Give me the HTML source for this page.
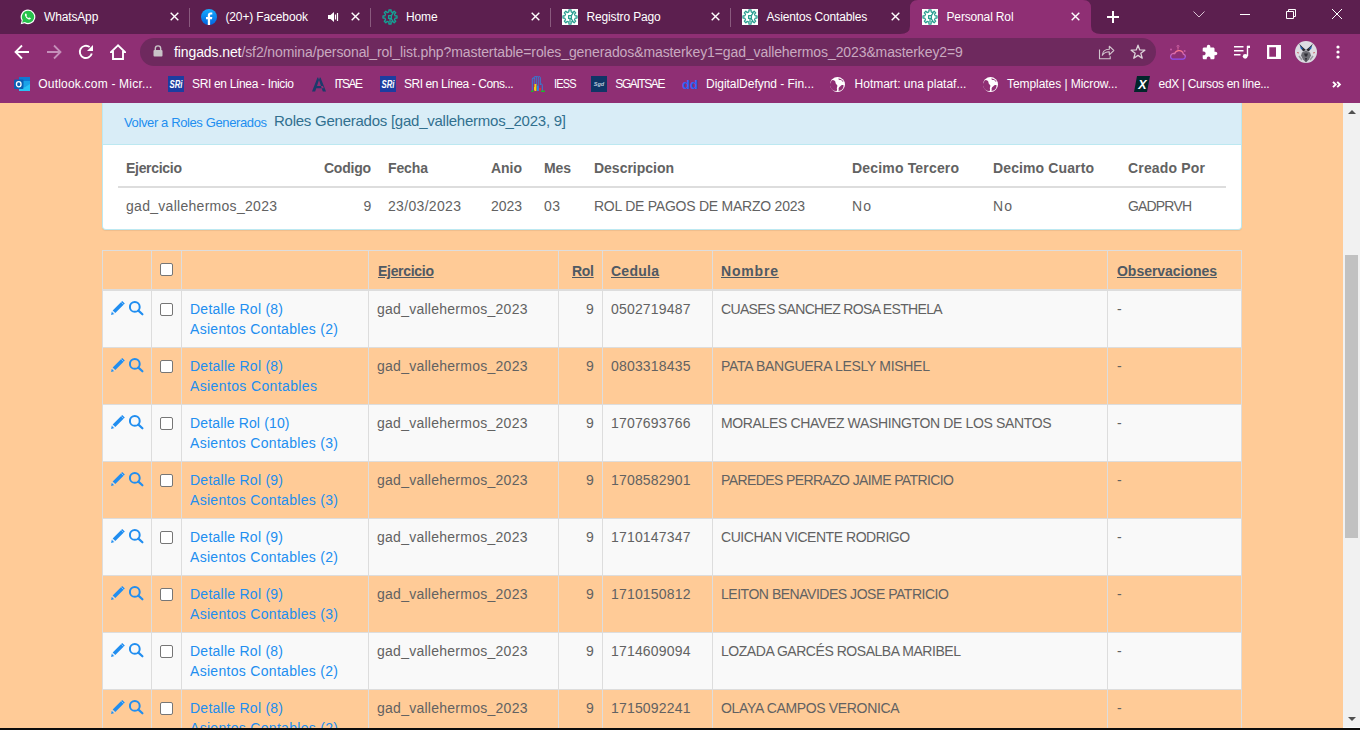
<!DOCTYPE html>
<html><head><meta charset="utf-8">
<style>
*{box-sizing:border-box}
html,body{margin:0;padding:0;width:1360px;height:730px;overflow:hidden;font-family:"Liberation Sans",sans-serif;background:#ffcb97}
.abs{position:absolute}
#tabs{position:absolute;left:0;top:0;width:1360px;height:34px;background:#5c1f4f}
#toolbar{position:absolute;left:0;top:34px;width:1360px;height:34px;background:#8f2f74}
#bmarks{position:absolute;left:0;top:68px;width:1360px;height:35px;background:#8f2f74}
.tt{position:absolute;top:9px;font-size:12px;color:#fff;white-space:nowrap;line-height:16px;letter-spacing:-0.15px}
.fav{position:absolute;top:9px;width:16px;height:16px}
.sep{position:absolute;top:8px;width:1px;height:19px;background:#8a5a7e}
.cls{position:absolute;top:12px;width:9px;height:9px}
.bt{position:absolute;top:8px;font-size:12px;color:#fff;white-space:nowrap;line-height:16px}
.bi{position:absolute;top:8px;width:16px;height:16px}
#page{position:absolute;left:0;top:103px;width:1343px;height:625px;background:#ffcb97;overflow:hidden}
#sb{position:absolute;left:1343px;top:103px;width:17px;height:625px;background:#f1f1f1}
#bottom{position:absolute;left:0;top:728px;width:1360px;height:2px;background:#0c0c0c}
.tx{position:absolute;white-space:nowrap;line-height:20px}
.cb{position:absolute;width:13px;height:13px;background:#fff;border:1px solid #767676;border-radius:2px}
</style></head><body>
<div id="tabs">
<svg class="abs" style="left:900px;top:0" width="202" height="34" viewBox="0 0 202 34"><path d="M0 34 Q10 34 10 26 L10 8 Q10 0 18 0 L183 0 Q191 0 191 8 L191 26 Q191 34 201 34 Z" fill="#8f2f74"/></svg>
<svg class="fav" style="left:20px" viewBox="0 0 16 16"><path d="M8 .6a7.3 7.3 0 0 0-6.3 11L.7 15.3l3.8-1A7.3 7.3 0 1 0 8 .6z" fill="#fff"/><path d="M8 1.8a6.1 6.1 0 0 0-5.2 9.3l-.7 2.7 2.8-.7A6.1 6.1 0 1 0 8 1.8z" fill="#27c24c"/><path d="M5.6 4.5c.3-.2.6-.1.7.2l.6 1.3c.1.3-.2.6-.5.9.4.9 1.1 1.6 2 2 .3-.3.6-.6.9-.5l1.3.6c.3.1.3.5.1.8-.5.7-1.2.9-2 .6A6 6 0 0 1 5 6.4c-.2-.8.1-1.5.6-1.9z" fill="#fff"/></svg>
<div class="tt" style="left:44px">WhatsApp</div>
<svg class="cls" style="left:169.5px" viewBox="0 0 9 9"><path d="M0.7 0.7L8.3 8.3M8.3 0.7L0.7 8.3" stroke="#fff" stroke-width="1.4"/></svg>
<svg class="fav" style="left:201px" viewBox="0 0 16 16"><defs><linearGradient id="fbg" x1="0" y1="0" x2="0" y2="1"><stop offset="0" stop-color="#18acfe"/><stop offset="1" stop-color="#0163e0"/></linearGradient></defs><circle cx="8" cy="8" r="8" fill="url(#fbg)"/><path d="M9.1 16V10.2h1.9l.3-2.2H9.1V6.6c0-.6.2-1 1-1h1.2V3.6c-.2 0-.9-.1-1.7-.1-1.7 0-2.8 1-2.8 2.9V8H5v2.2h1.8V16z" fill="#fff"/></svg>
<div class="tt" style="left:225.5px">(20+) Facebook</div>
<svg class="cls" style="left:350.5px" viewBox="0 0 9 9"><path d="M0.7 0.7L8.3 8.3M8.3 0.7L0.7 8.3" stroke="#fff" stroke-width="1.4"/></svg>
<svg class="fav" style="left:382px" viewBox="0 0 16 16"><rect width="16" height="16" fill="none"/><g fill="none" stroke="#12a596" stroke-width="1.3" stroke-linejoin="round"><path d="M6.88 2.82 L6.89 0.99 L9.11 0.99 L9.12 2.82 L10.87 3.55 L12.17 2.26 L13.74 3.83 L12.45 5.13 L13.18 6.88 L15.01 6.89 L15.01 9.11 L13.18 9.12 L12.45 10.87 L13.74 12.17 L12.17 13.74 L10.87 12.45 L9.12 13.18 L9.11 15.01 L6.89 15.01 L6.88 13.18 L5.13 12.45 L3.83 13.74 L2.26 12.17 L3.55 10.87 L2.82 9.12 L0.99 9.11 L0.99 6.89 L2.82 6.88 L3.55 5.13 L2.26 3.83 L3.83 2.26 L5.13 3.55Z"/><rect x="6.6" y="6.6" width="2.8" height="2.8"/><path d="M8 9.4V13.3M9.4 6.6L11.2 3.6M9 9.4l2 3"/></g></svg>
<div class="tt" style="left:406px">Home</div>
<svg class="cls" style="left:530.5px" viewBox="0 0 9 9"><path d="M0.7 0.7L8.3 8.3M8.3 0.7L0.7 8.3" stroke="#fff" stroke-width="1.4"/></svg>
<svg class="fav" style="left:562px" viewBox="0 0 16 16"><rect width="16" height="16" fill="#fff"/><g fill="none" stroke="#2a9d91" stroke-width="1.25" stroke-linejoin="round"><path d="M6.88 2.82 L6.89 0.99 L9.11 0.99 L9.12 2.82 L10.87 3.55 L12.17 2.26 L13.74 3.83 L12.45 5.13 L13.18 6.88 L15.01 6.89 L15.01 9.11 L13.18 9.12 L12.45 10.87 L13.74 12.17 L12.17 13.74 L10.87 12.45 L9.12 13.18 L9.11 15.01 L6.89 15.01 L6.88 13.18 L5.13 12.45 L3.83 13.74 L2.26 12.17 L3.55 10.87 L2.82 9.12 L0.99 9.11 L0.99 6.89 L2.82 6.88 L3.55 5.13 L2.26 3.83 L3.83 2.26 L5.13 3.55Z"/><rect x="6.6" y="6.6" width="2.8" height="2.8"/><path d="M8 9.4V13.3M9.4 6.6L11.2 3.6M9 9.4l2 3"/></g></svg>
<div class="tt" style="left:586.5px">Registro Pago</div>
<svg class="cls" style="left:710.5px" viewBox="0 0 9 9"><path d="M0.7 0.7L8.3 8.3M8.3 0.7L0.7 8.3" stroke="#fff" stroke-width="1.4"/></svg>
<svg class="fav" style="left:742px" viewBox="0 0 16 16"><rect width="16" height="16" fill="#fff"/><g fill="none" stroke="#2a9d91" stroke-width="1.25" stroke-linejoin="round"><path d="M6.88 2.82 L6.89 0.99 L9.11 0.99 L9.12 2.82 L10.87 3.55 L12.17 2.26 L13.74 3.83 L12.45 5.13 L13.18 6.88 L15.01 6.89 L15.01 9.11 L13.18 9.12 L12.45 10.87 L13.74 12.17 L12.17 13.74 L10.87 12.45 L9.12 13.18 L9.11 15.01 L6.89 15.01 L6.88 13.18 L5.13 12.45 L3.83 13.74 L2.26 12.17 L3.55 10.87 L2.82 9.12 L0.99 9.11 L0.99 6.89 L2.82 6.88 L3.55 5.13 L2.26 3.83 L3.83 2.26 L5.13 3.55Z"/><rect x="6.6" y="6.6" width="2.8" height="2.8"/><path d="M8 9.4V13.3M9.4 6.6L11.2 3.6M9 9.4l2 3"/></g></svg>
<div class="tt" style="left:766.5px">Asientos Contables</div>
<svg class="cls" style="left:890.5px" viewBox="0 0 9 9"><path d="M0.7 0.7L8.3 8.3M8.3 0.7L0.7 8.3" stroke="#fff" stroke-width="1.4"/></svg>
<svg class="fav" style="left:922px" viewBox="0 0 16 16"><rect width="16" height="16" fill="#fff"/><g fill="none" stroke="#2a9d91" stroke-width="1.25" stroke-linejoin="round"><path d="M6.88 2.82 L6.89 0.99 L9.11 0.99 L9.12 2.82 L10.87 3.55 L12.17 2.26 L13.74 3.83 L12.45 5.13 L13.18 6.88 L15.01 6.89 L15.01 9.11 L13.18 9.12 L12.45 10.87 L13.74 12.17 L12.17 13.74 L10.87 12.45 L9.12 13.18 L9.11 15.01 L6.89 15.01 L6.88 13.18 L5.13 12.45 L3.83 13.74 L2.26 12.17 L3.55 10.87 L2.82 9.12 L0.99 9.11 L0.99 6.89 L2.82 6.88 L3.55 5.13 L2.26 3.83 L3.83 2.26 L5.13 3.55Z"/><rect x="6.6" y="6.6" width="2.8" height="2.8"/><path d="M8 9.4V13.3M9.4 6.6L11.2 3.6M9 9.4l2 3"/></g></svg>
<div class="tt" style="left:946.5px">Personal Rol</div>
<svg class="cls" style="left:1070.5px" viewBox="0 0 9 9"><path d="M0.7 0.7L8.3 8.3M8.3 0.7L0.7 8.3" stroke="#fff" stroke-width="1.4"/></svg>
<div class="sep" style="left:189px"></div>
<div class="sep" style="left:370px"></div>
<div class="sep" style="left:550px"></div>
<div class="sep" style="left:730px"></div>
<svg class="abs" style="left:328px;top:12px" width="11" height="10" viewBox="0 0 11 10"><path d="M0 3h2.5L6 0v10L2.5 7H0z" fill="#fff"/><path d="M7.5 2.5v5M9.5 1v8" stroke="#fff" stroke-width="1.2"/></svg>
<svg class="abs" style="left:1107px;top:11px" width="12" height="12" viewBox="0 0 12 12"><path d="M6 0v12M0 6h12" stroke="#fff" stroke-width="2"/></svg>
<svg class="abs" style="left:1193px;top:11px" width="12" height="7" viewBox="0 0 12 7"><path d="M.5.5L6 6 11.5.5" fill="none" stroke="#d8c2d2" stroke-width="1"/></svg>
<div class="abs" style="left:1240px;top:14px;width:10px;height:1px;background:#fff"></div>
<svg class="abs" style="left:1286px;top:9px" width="10" height="10" viewBox="0 0 10 10"><path d="M.5 2.5h7v7h-7z M2.5 2.5V.5h7v7h-2" fill="none" stroke="#fff" stroke-width="1"/></svg>
<svg class="abs" style="left:1332px;top:9px" width="10" height="10" viewBox="0 0 10 10"><path d="M0 0L10 10M10 0L0 10" stroke="#fff" stroke-width="1"/></svg>
</div>
<div id="toolbar">
<svg class="abs" style="left:14px;top:10px" width="16" height="16" viewBox="0 0 16 16"><path d="M15 8H2M8 1.5L1.5 8 8 14.5" fill="none" stroke="#fff" stroke-width="1.8"/></svg>
<svg class="abs" style="left:46px;top:10px" width="16" height="16" viewBox="0 0 16 16"><path d="M1 8h13M8 1.5L14.5 8 8 14.5" fill="none" stroke="#c590ba" stroke-width="1.8"/></svg>
<svg class="abs" style="left:78px;top:10px" width="16" height="16" viewBox="0 0 16 16"><path d="M13.79 9.48A6.1 6.1 0 1 1 11.66 3.09" fill="none" stroke="#fff" stroke-width="1.9"/><path d="M9 6.9H15V0.9z" fill="#fff"/></svg>
<svg class="abs" style="left:110px;top:10px" width="16" height="16" viewBox="0 0 16 16"><path d="M8 1.4L1 8H3V15H13V8H15Z" fill="none" stroke="#fff" stroke-width="1.9" stroke-linejoin="miter" stroke-miterlimit="3"/></svg>
<div class="abs" style="left:140px;top:4px;width:1016px;height:28px;border-radius:14px;background:#6e295e"></div>
<svg class="abs" style="left:153px;top:11px" width="10" height="12" viewBox="0 0 10 12"><path d="M2.3 5V3.6a2.7 2.7 0 0 1 5.4 0V5" fill="none" stroke="#c9c4c8" stroke-width="1.4"/><rect x="0.5" y="5" width="9" height="6.5" rx="1" fill="#c9c4c8"/></svg>
<div class="abs" style="left:174px;top:10px;font-size:14px;line-height:16px;color:#fff;white-space:nowrap;letter-spacing:-0.1px" id="url">fingads.net<span style="color:#c9a9c0">/sf2/nomina/personal_rol_list.php?mastertable=roles_generados&amp;masterkey1=gad_vallehermos_2023&amp;masterkey2=9</span></div>
<svg class="abs" style="left:1098px;top:10px" width="17" height="16" viewBox="0 0 17 16"><path d="M1.5 5.5V14.7H12.2V12.2" fill="none" stroke="#d2c6ce" stroke-width="1.1"/><path d="M4.3 11.3C4.6 7.6 7.3 5.3 11.3 5.3V2.2L15.8 6.5 11.3 10.8V7.8C8 7.8 5.8 9.2 4.3 11.3z" fill="none" stroke="#d2c6ce" stroke-width="1.1" stroke-linejoin="round"/></svg>
<svg class="abs" style="left:1130px;top:10px" width="16" height="16" viewBox="0 0 16 16"><path d="M8.00 1.20 L9.76 5.97 L14.85 6.18 L10.85 9.33 L12.23 14.22 L8.00 11.40 L3.77 14.22 L5.15 9.33 L1.15 6.18 L6.24 5.97Z" fill="none" stroke="#dcd2d8" stroke-width="1.3" stroke-linejoin="round"/></svg>
<svg class="abs" style="left:1168px;top:9px" width="20" height="18" viewBox="0 0 20 18"><defs><linearGradient id="wg" x1="0" y1="0" x2="0" y2="1"><stop offset="0" stop-color="#ff7a8a"/><stop offset="1" stop-color="#8a4df5"/></linearGradient></defs><path d="M4.5 16.2h10.5a2.6 2.6 0 0 0 .4-5.1 4.6 4.6 0 0 0-8.8-.4A2.8 2.8 0 0 0 4.5 16.2z" fill="none" stroke="url(#wg)" stroke-width="1.3"/><circle cx="10" cy="3.3" r="1" fill="none" stroke="#d266a8" stroke-width=".8"/><path d="M10 4.3v2.5" stroke="#e86e9e" stroke-width=".8"/><circle cx="3" cy="6.6" r="1" fill="#c85aa5"/><circle cx="16.6" cy="8" r="1" fill="#c85aa5"/></svg>
<svg class="abs" style="left:1202px;top:10px" width="16" height="16" viewBox="1 0 23 23"><path d="M20.5 11H19V7c0-1.1-.9-2-2-2h-4V3.5C13 2.12 11.88 1 10.5 1S8 2.12 8 3.5V5H4c-1.1 0-1.99.9-1.99 2v3.8H3.5c1.49 0 2.7 1.21 2.7 2.7s-1.21 2.7-2.7 2.7H2V20c0 1.1.9 2 2 2h3.8v-1.5c0-1.49 1.210-2.7 2.7-2.7 1.49 0 2.7 1.21 2.7 2.7V22H17c1.1 0 2-.9 2-2v-4h1.5c1.38 0 2.5-1.12 2.5-2.5S21.88 11 20.5 11z" fill="#fff"/></svg>
<svg class="abs" style="left:1233px;top:11px" width="17" height="14" viewBox="0 0 17 14"><path d="M1 1.7h9.5M1 5.7h9.5M1 9.7h6.5" stroke="#fff" stroke-width="1.5"/><path d="M14.5 1v10" stroke="#fff" stroke-width="1.4"/><path d="M14 0.7h3v2.3h-3z" fill="#fff"/><circle cx="12.2" cy="11.3" r="2.4" fill="#fff"/></svg>
<svg class="abs" style="left:1267px;top:11px" width="14" height="14" viewBox="0 0 14 14"><path d="M0 0h14v14H0z M2.3 2.3v9.4H9V2.3z" fill="#fff" fill-rule="evenodd"/></svg>
<svg class="abs" style="left:1295px;top:7px" width="22" height="22" viewBox="0 0 22 22"><defs><clipPath id="avc"><circle cx="11" cy="11" r="11"/></clipPath></defs><g clip-path="url(#avc)"><rect width="22" height="22" fill="#dcdce2"/><path d="M4 2.5l3.5 3.5 3.5 3-3 1.5z M18 2.5l-3.5 3.5-3.5 3 3 1.5z" fill="#2b2b33"/><path d="M5 4.5l3 3.3-2 .8z M17 4.5l-3 3.3 2 .8z" fill="#1f5fb5"/><path d="M7 11.5l4-2 4 2 1 3-2 4-3 3-3-3-2-4z" fill="#6d6d74"/><path d="M9 12.5h4l-1 3h-2z M10 17l1 4 1-4z" fill="#2e2e36"/><path d="M4 15l3 4M18 15l-3 4" stroke="#9a9aa2" stroke-width="1.5"/><path d="M2 11.5l2 .5M20 11.5l-2 .5" stroke="#c65050" stroke-width=".8"/></g></svg>
<svg class="abs" style="left:1336px;top:11px" width="4" height="14" viewBox="0 0 4 14"><circle cx="2" cy="2" r="1.6" fill="#fff"/><circle cx="2" cy="7" r="1.6" fill="#fff"/><circle cx="2" cy="12" r="1.6" fill="#fff"/></svg>
</div>
<div id="bmarks">
<svg class="bi" style="left:14px" viewBox="0 0 16 16"><rect x="5" y="1" width="11" height="14" rx="1" fill="#1ba2e8"/><path d="M5 8l5.5 3.5L16 8v7H5z" fill="#28c3f5"/><rect x="5" y="1" width="11" height="4" fill="#0f78d4"/><rect x="0" y="3.5" width="9.5" height="9.5" rx="1" fill="#0a5fb4"/><ellipse cx="4.75" cy="8.25" rx="2.3" ry="2.6" fill="none" stroke="#fff" stroke-width="1.3"/></svg>
<div class="bt" style="left:38.3px;letter-spacing:0.200px">Outlook.com - Micr...</div>
<svg class="bi" style="left:168px" viewBox="0 0 16 16"><rect width="16" height="16" fill="#1c3da0"/><text x="1.5" y="12" font-family="Liberation Sans" font-weight="bold" font-style="italic" font-size="10" fill="#fff" textLength="13" lengthAdjust="spacingAndGlyphs">SRi</text></svg>
<div class="bt" style="left:192.0px;letter-spacing:-0.335px">SRI en Línea - Inicio</div>
<svg class="bi" style="left:311px" viewBox="0 0 16 16"><path d="M1 15.5L6.5 1.5h2.3L4.2 15.5z M15 15.5L9.5 1.5H7.2l4.6 14z M4 10l8 0 0.8 2.3H3.2z" fill="#1b3b6b"/></svg>
<div class="bt" style="left:334.6px;letter-spacing:-1.575px">ITSAE</div>
<svg class="bi" style="left:380px" viewBox="0 0 16 16"><rect width="16" height="16" fill="#1c3da0"/><text x="1.5" y="12" font-family="Liberation Sans" font-weight="bold" font-style="italic" font-size="10" fill="#fff" textLength="13" lengthAdjust="spacingAndGlyphs">SRi</text></svg>
<div class="bt" style="left:404.0px;letter-spacing:-0.433px">SRI en Línea - Cons...</div>
<svg class="bi" style="left:531px" viewBox="0 0 16 16"><path d="M1.3 15V3.2Q1.3 1.8 2.3 1.8T3.3 3.2V1.6Q3.3 0.4 4.3 0.4T5.3 1.6V1.3Q5.3 0.2 6.3 0.2T7.3 1.3V1.6Q7.3 0.6 8.3 0.6T9.3 1.6V8.8Q9.6 7.9 10.5 8T11.3 9.3V15" fill="none" stroke="#2a86e0" stroke-width="0.9"/><path d="M3.3 3.2V8M5.3 1.6V9M7.3 1.6V9.5" stroke="#2a86e0" stroke-width="0.8"/><path d="M3.4 8h2v7h-2z M3 11h1.5v3H3z" fill="#f2d40f"/><path d="M5.9 9.5h2v5.5h-2z" fill="#2a86e0"/><path d="M8 12h2v2.6H8z" fill="#e2302a"/><path d="M0 14.6h2.5V16H0z M10 14.6h4V16h-4z" fill="#21b52a"/></svg>
<div class="bt" style="left:554px;letter-spacing:-0.9px;transform:scaleX(0.92);transform-origin:left">IESS</div>
<svg class="bi" style="left:591px" viewBox="0 0 16 16"><rect width="16" height="16" fill="#0f3566"/><text x="8" y="10" font-family="Liberation Sans" font-style="italic" font-weight="bold" font-size="5.5" fill="#b9c8dc" text-anchor="middle">Sgd</text></svg>
<div class="bt" style="left:615.3px;letter-spacing:-1.414px">SGAITSAE</div>
<svg class="bi" style="left:682px" viewBox="0 0 16 16"><text x="0" y="13" font-family="Liberation Sans" font-weight="bold" font-size="13.5" fill="#2d62f7" textLength="16" lengthAdjust="spacingAndGlyphs">dd</text></svg>
<div class="bt" style="left:706.0px;letter-spacing:-0.033px">DigitalDefynd - Fin...</div>
<svg class="bi" style="left:830px;top:9px;width:15px;height:15px" viewBox="0 0 16 16"><circle cx="8" cy="8" r="8" fill="#fff"/><path d="M2.6 3.2c2 .2 3.4 1.3 3.3 2.8-.1 1.3 1.5 1.8 1.9 3.1.4 1.2-.9 1.9-.4 3.5.3.8.1 1.7-.3 2.4A6.6 6.6 0 0 1 2.6 3.2zM8.8 1.5c.2 1.2 1.4 1.8 2.7 1.7 1.1 0 1.3 1.6 2.4 1.9l.6.2A6.6 6.6 0 0 0 8.8 1.5zM14.6 9c-1.1-.7-2.6-.6-3.3.5-.6 1-2 1.2-2.1 2.6 0 1.1.3 2.1-.3 2.9a6.6 6.6 0 0 0 5.7-6z" fill="#8f2f74"/></svg>
<div class="bt" style="left:854.6px;letter-spacing:-0.014px">Hotmart: una plataf...</div>
<svg class="bi" style="left:983px;top:9px;width:15px;height:15px" viewBox="0 0 16 16"><circle cx="8" cy="8" r="8" fill="#fff"/><path d="M2.6 3.2c2 .2 3.4 1.3 3.3 2.8-.1 1.3 1.5 1.8 1.9 3.1.4 1.2-.9 1.9-.4 3.5.3.8.1 1.7-.3 2.4A6.6 6.6 0 0 1 2.6 3.2zM8.8 1.5c.2 1.2 1.4 1.8 2.7 1.7 1.1 0 1.3 1.6 2.4 1.9l.6.2A6.6 6.6 0 0 0 8.8 1.5zM14.6 9c-1.1-.7-2.6-.6-3.3.5-.6 1-2 1.2-2.1 2.6 0 1.1.3 2.1-.3 2.9a6.6 6.6 0 0 0 5.7-6z" fill="#8f2f74"/></svg>
<div class="bt" style="left:1007.0px;letter-spacing:-0.060px">Templates | Microw...</div>
<svg class="bi" style="left:1134px" viewBox="0 0 16 16"><path d="M3 0h13l-3 16H0z" fill="#02262b"/><text x="8.3" y="13" font-family="Liberation Sans" font-weight="bold" font-style="italic" font-size="12.5" fill="#fff" text-anchor="middle">X</text></svg>
<div class="bt" style="left:1158.6px;letter-spacing:-0.341px">edX | Cursos en líne...</div>
<svg class="abs" style="left:1332px;top:13px" width="10" height="7" viewBox="0 0 10 7"><path d="M1 .8l2.7 2.7L1 6.2M5.2 .8l2.7 2.7-2.7 2.7" fill="none" stroke="#fff" stroke-width="1.9"/></svg>
</div>
<div id="page">
<!--PAGE-->
<div class="abs" style="left:102px;top:0px;width:1140px;height:127px;background:#fff;border:1px solid #bce8f1;border-top:none;border-radius:0 0 4px 4px;box-shadow:0 1px 1px rgba(0,0,0,.07)"></div>
<div class="abs" style="left:103px;top:0px;width:1138px;height:41px;background:#d9edf7;"></div>
<div class="abs" style="left:103px;top:41px;width:1138px;height:1px;background:#bce8f1;"></div>
<div class="abs" style="left:118px;top:83px;width:1108px;height:2px;background:#ddd;"></div>
<div class="abs" style="left:102px;top:147px;width:1140px;height:41px;background:#ffcb97;"></div>
<div class="abs" style="left:102px;top:188px;width:1140px;height:56px;background:#f9f9f9;"></div>
<div class="abs" style="left:102px;top:245px;width:1140px;height:56px;background:#ffcb97;"></div>
<div class="abs" style="left:102px;top:302px;width:1140px;height:56px;background:#f9f9f9;"></div>
<div class="abs" style="left:102px;top:359px;width:1140px;height:56px;background:#ffcb97;"></div>
<div class="abs" style="left:102px;top:416px;width:1140px;height:56px;background:#f9f9f9;"></div>
<div class="abs" style="left:102px;top:473px;width:1140px;height:56px;background:#ffcb97;"></div>
<div class="abs" style="left:102px;top:530px;width:1140px;height:56px;background:#f9f9f9;"></div>
<div class="abs" style="left:102px;top:587px;width:1140px;height:56px;background:#ffcb97;"></div>
<div class="abs" style="left:102px;top:147px;width:1140px;height:1px;background:#ddd;"></div>
<div class="abs" style="left:102px;top:186px;width:1140px;height:2px;background:#ddd;"></div>
<div class="abs" style="left:102px;top:244px;width:1140px;height:1px;background:#ddd;"></div>
<div class="abs" style="left:102px;top:301px;width:1140px;height:1px;background:#ddd;"></div>
<div class="abs" style="left:102px;top:358px;width:1140px;height:1px;background:#ddd;"></div>
<div class="abs" style="left:102px;top:415px;width:1140px;height:1px;background:#ddd;"></div>
<div class="abs" style="left:102px;top:472px;width:1140px;height:1px;background:#ddd;"></div>
<div class="abs" style="left:102px;top:529px;width:1140px;height:1px;background:#ddd;"></div>
<div class="abs" style="left:102px;top:586px;width:1140px;height:1px;background:#ddd;"></div>
<div class="abs" style="left:102px;top:643px;width:1140px;height:1px;background:#ddd;"></div>
<div class="abs" style="left:102px;top:147px;width:1px;height:500px;background:#ddd;"></div>
<div class="abs" style="left:151px;top:147px;width:1px;height:500px;background:#ddd;"></div>
<div class="abs" style="left:181px;top:147px;width:1px;height:500px;background:#ddd;"></div>
<div class="abs" style="left:368px;top:147px;width:1px;height:500px;background:#ddd;"></div>
<div class="abs" style="left:558px;top:147px;width:1px;height:500px;background:#ddd;"></div>
<div class="abs" style="left:602px;top:147px;width:1px;height:500px;background:#ddd;"></div>
<div class="abs" style="left:712px;top:147px;width:1px;height:500px;background:#ddd;"></div>
<div class="abs" style="left:1107px;top:147px;width:1px;height:500px;background:#ddd;"></div>
<div class="abs" style="left:1241px;top:147px;width:1px;height:500px;background:#ddd;"></div>
<div class="cb" style="left:160px;top:160px"></div>
<svg class="abs" style="left:111px;top:198px" width="14" height="14" viewBox="0 0 14 14"><path d="M1.7 9.5L4.3 12.1 13.8 2.6 11.2 0z" fill="#218ef0"/><path d="M0.9 10.3L3.5 12.9 0.1 13.9z" fill="#218ef0"/><path d="M0.7 10.2L3.6 13.1" stroke="#fff" stroke-width="0.7"/><path d="M10.3 1.3L12.5 3.5" stroke="#fff" stroke-width="0.6" opacity=".8"/></svg>
<svg class="abs" style="left:129px;top:198px" width="15" height="15" viewBox="0 0 15 15"><circle cx="5.8" cy="5.9" r="4.9" fill="none" stroke="#218ef0" stroke-width="2"/><path d="M9.4 9.6l4 3.7" stroke="#218ef0" stroke-width="2.2" stroke-linecap="round"/></svg>
<div class="cb" style="left:160px;top:200px"></div>
<svg class="abs" style="left:111px;top:255px" width="14" height="14" viewBox="0 0 14 14"><path d="M1.7 9.5L4.3 12.1 13.8 2.6 11.2 0z" fill="#218ef0"/><path d="M0.9 10.3L3.5 12.9 0.1 13.9z" fill="#218ef0"/><path d="M0.7 10.2L3.6 13.1" stroke="#fff" stroke-width="0.7"/><path d="M10.3 1.3L12.5 3.5" stroke="#fff" stroke-width="0.6" opacity=".8"/></svg>
<svg class="abs" style="left:129px;top:255px" width="15" height="15" viewBox="0 0 15 15"><circle cx="5.8" cy="5.9" r="4.9" fill="none" stroke="#218ef0" stroke-width="2"/><path d="M9.4 9.6l4 3.7" stroke="#218ef0" stroke-width="2.2" stroke-linecap="round"/></svg>
<div class="cb" style="left:160px;top:257px"></div>
<svg class="abs" style="left:111px;top:312px" width="14" height="14" viewBox="0 0 14 14"><path d="M1.7 9.5L4.3 12.1 13.8 2.6 11.2 0z" fill="#218ef0"/><path d="M0.9 10.3L3.5 12.9 0.1 13.9z" fill="#218ef0"/><path d="M0.7 10.2L3.6 13.1" stroke="#fff" stroke-width="0.7"/><path d="M10.3 1.3L12.5 3.5" stroke="#fff" stroke-width="0.6" opacity=".8"/></svg>
<svg class="abs" style="left:129px;top:312px" width="15" height="15" viewBox="0 0 15 15"><circle cx="5.8" cy="5.9" r="4.9" fill="none" stroke="#218ef0" stroke-width="2"/><path d="M9.4 9.6l4 3.7" stroke="#218ef0" stroke-width="2.2" stroke-linecap="round"/></svg>
<div class="cb" style="left:160px;top:314px"></div>
<svg class="abs" style="left:111px;top:369px" width="14" height="14" viewBox="0 0 14 14"><path d="M1.7 9.5L4.3 12.1 13.8 2.6 11.2 0z" fill="#218ef0"/><path d="M0.9 10.3L3.5 12.9 0.1 13.9z" fill="#218ef0"/><path d="M0.7 10.2L3.6 13.1" stroke="#fff" stroke-width="0.7"/><path d="M10.3 1.3L12.5 3.5" stroke="#fff" stroke-width="0.6" opacity=".8"/></svg>
<svg class="abs" style="left:129px;top:369px" width="15" height="15" viewBox="0 0 15 15"><circle cx="5.8" cy="5.9" r="4.9" fill="none" stroke="#218ef0" stroke-width="2"/><path d="M9.4 9.6l4 3.7" stroke="#218ef0" stroke-width="2.2" stroke-linecap="round"/></svg>
<div class="cb" style="left:160px;top:371px"></div>
<svg class="abs" style="left:111px;top:426px" width="14" height="14" viewBox="0 0 14 14"><path d="M1.7 9.5L4.3 12.1 13.8 2.6 11.2 0z" fill="#218ef0"/><path d="M0.9 10.3L3.5 12.9 0.1 13.9z" fill="#218ef0"/><path d="M0.7 10.2L3.6 13.1" stroke="#fff" stroke-width="0.7"/><path d="M10.3 1.3L12.5 3.5" stroke="#fff" stroke-width="0.6" opacity=".8"/></svg>
<svg class="abs" style="left:129px;top:426px" width="15" height="15" viewBox="0 0 15 15"><circle cx="5.8" cy="5.9" r="4.9" fill="none" stroke="#218ef0" stroke-width="2"/><path d="M9.4 9.6l4 3.7" stroke="#218ef0" stroke-width="2.2" stroke-linecap="round"/></svg>
<div class="cb" style="left:160px;top:428px"></div>
<svg class="abs" style="left:111px;top:483px" width="14" height="14" viewBox="0 0 14 14"><path d="M1.7 9.5L4.3 12.1 13.8 2.6 11.2 0z" fill="#218ef0"/><path d="M0.9 10.3L3.5 12.9 0.1 13.9z" fill="#218ef0"/><path d="M0.7 10.2L3.6 13.1" stroke="#fff" stroke-width="0.7"/><path d="M10.3 1.3L12.5 3.5" stroke="#fff" stroke-width="0.6" opacity=".8"/></svg>
<svg class="abs" style="left:129px;top:483px" width="15" height="15" viewBox="0 0 15 15"><circle cx="5.8" cy="5.9" r="4.9" fill="none" stroke="#218ef0" stroke-width="2"/><path d="M9.4 9.6l4 3.7" stroke="#218ef0" stroke-width="2.2" stroke-linecap="round"/></svg>
<div class="cb" style="left:160px;top:485px"></div>
<svg class="abs" style="left:111px;top:540px" width="14" height="14" viewBox="0 0 14 14"><path d="M1.7 9.5L4.3 12.1 13.8 2.6 11.2 0z" fill="#218ef0"/><path d="M0.9 10.3L3.5 12.9 0.1 13.9z" fill="#218ef0"/><path d="M0.7 10.2L3.6 13.1" stroke="#fff" stroke-width="0.7"/><path d="M10.3 1.3L12.5 3.5" stroke="#fff" stroke-width="0.6" opacity=".8"/></svg>
<svg class="abs" style="left:129px;top:540px" width="15" height="15" viewBox="0 0 15 15"><circle cx="5.8" cy="5.9" r="4.9" fill="none" stroke="#218ef0" stroke-width="2"/><path d="M9.4 9.6l4 3.7" stroke="#218ef0" stroke-width="2.2" stroke-linecap="round"/></svg>
<div class="cb" style="left:160px;top:542px"></div>
<svg class="abs" style="left:111px;top:597px" width="14" height="14" viewBox="0 0 14 14"><path d="M1.7 9.5L4.3 12.1 13.8 2.6 11.2 0z" fill="#218ef0"/><path d="M0.9 10.3L3.5 12.9 0.1 13.9z" fill="#218ef0"/><path d="M0.7 10.2L3.6 13.1" stroke="#fff" stroke-width="0.7"/><path d="M10.3 1.3L12.5 3.5" stroke="#fff" stroke-width="0.6" opacity=".8"/></svg>
<svg class="abs" style="left:129px;top:597px" width="15" height="15" viewBox="0 0 15 15"><circle cx="5.8" cy="5.9" r="4.9" fill="none" stroke="#218ef0" stroke-width="2"/><path d="M9.4 9.6l4 3.7" stroke="#218ef0" stroke-width="2.2" stroke-linecap="round"/></svg>
<div class="cb" style="left:160px;top:599px"></div>
<div class="tx" style="left:124.00px;top:9.50px;font-size:13px;font-weight:400;color:#218ef0;letter-spacing:-0.381px;">Volver a Roles Generados</div>
<div class="tx" style="left:274.00px;top:7.80px;font-size:15px;font-weight:400;color:#31708f;letter-spacing:-0.247px;">Roles Generados [gad_vallehermos_2023, 9]</div>
<div class="tx" style="left:126.00px;top:55.15px;font-size:14px;font-weight:700;color:#626262;letter-spacing:-0.297px;">Ejercicio</div>
<div class="tx" style="left:324.00px;top:55.15px;font-size:14px;font-weight:700;color:#626262;letter-spacing:-0.244px;">Codigo</div>
<div class="tx" style="left:388.00px;top:55.15px;font-size:14px;font-weight:700;color:#626262;letter-spacing:-0.117px;">Fecha</div>
<div class="tx" style="left:491.00px;top:55.15px;font-size:14px;font-weight:700;color:#626262;letter-spacing:-0.036px;">Anio</div>
<div class="tx" style="left:544.00px;top:55.15px;font-size:14px;font-weight:700;color:#626262;letter-spacing:-0.117px;">Mes</div>
<div class="tx" style="left:594.00px;top:55.15px;font-size:14px;font-weight:700;color:#626262;letter-spacing:-0.014px;">Descripcion</div>
<div class="tx" style="left:852.00px;top:55.15px;font-size:14px;font-weight:700;color:#626262;letter-spacing:0.171px;">Decimo Tercero</div>
<div class="tx" style="left:993.00px;top:55.15px;font-size:14px;font-weight:700;color:#626262;letter-spacing:0.118px;">Decimo Cuarto</div>
<div class="tx" style="left:1128.00px;top:55.15px;font-size:14px;font-weight:700;color:#626262;letter-spacing:0.170px;">Creado Por</div>
<div class="tx" style="left:126.00px;top:93.15px;font-size:14px;font-weight:400;color:#626262;letter-spacing:0.286px;">gad_vallehermos_2023</div>
<div class="tx" style="left:363.50px;top:93.15px;font-size:14px;font-weight:400;color:#626262;letter-spacing:0.000px;">9</div>
<div class="tx" style="left:388.00px;top:93.15px;font-size:14px;font-weight:400;color:#626262;letter-spacing:0.325px;">23/03/2023</div>
<div class="tx" style="left:491.00px;top:93.15px;font-size:14px;font-weight:400;color:#626262;letter-spacing:-0.052px;">2023</div>
<div class="tx" style="left:544.00px;top:93.15px;font-size:14px;font-weight:400;color:#626262;letter-spacing:0.422px;">03</div>
<div class="tx" style="left:594.00px;top:93.15px;font-size:14px;font-weight:400;color:#626262;letter-spacing:-0.242px;">ROL DE PAGOS DE MARZO 2023</div>
<div class="tx" style="left:852.00px;top:93.15px;font-size:14px;font-weight:400;color:#626262;letter-spacing:1.094px;">No</div>
<div class="tx" style="left:993.00px;top:93.15px;font-size:14px;font-weight:400;color:#626262;letter-spacing:1.094px;">No</div>
<div class="tx" style="left:1128.00px;top:93.15px;font-size:14px;font-weight:400;color:#626262;letter-spacing:-0.831px;">GADPRVH</div>
<div class="tx" style="left:378.00px;top:158.15px;font-size:14px;font-weight:700;color:#4f5963;letter-spacing:-0.297px;text-decoration:underline">Ejercicio</div>
<div class="tx" style="left:572.00px;top:158.15px;font-size:14px;font-weight:700;color:#4f5963;letter-spacing:-0.281px;text-decoration:underline">Rol</div>
<div class="tx" style="left:611.00px;top:158.15px;font-size:14px;font-weight:700;color:#4f5963;letter-spacing:0.263px;text-decoration:underline">Cedula</div>
<div class="tx" style="left:721.00px;top:158.15px;font-size:14px;font-weight:700;color:#4f5963;letter-spacing:0.819px;text-decoration:underline">Nombre</div>
<div class="tx" style="left:1117.00px;top:158.15px;font-size:14px;font-weight:700;color:#4f5963;letter-spacing:-0.033px;text-decoration:underline">Observaciones</div>
<div class="tx" style="left:190.00px;top:196.15px;font-size:14px;font-weight:400;color:#218ef0;letter-spacing:0.251px;">Detalle Rol (8)</div>
<div class="tx" style="left:190.00px;top:216.15px;font-size:14px;font-weight:400;color:#218ef0;letter-spacing:0.303px;">Asientos Contables (2)</div>
<div class="tx" style="left:377.00px;top:196.15px;font-size:14px;font-weight:400;color:#626262;letter-spacing:0.260px;">gad_vallehermos_2023</div>
<div class="tx" style="left:586.00px;top:196.15px;font-size:14px;font-weight:400;color:#626262;letter-spacing:0.000px;">9</div>
<div class="tx" style="left:611.00px;top:196.15px;font-size:14px;font-weight:400;color:#626262;letter-spacing:0.181px;">0502719487</div>
<div class="tx" style="left:721.00px;top:196.15px;font-size:14px;font-weight:400;color:#626262;letter-spacing:-0.659px;">CUASES SANCHEZ ROSA ESTHELA</div>
<div class="tx" style="left:1117.00px;top:196.15px;font-size:14px;font-weight:400;color:#626262;letter-spacing:0.000px;">-</div>
<div class="tx" style="left:190.00px;top:253.15px;font-size:14px;font-weight:400;color:#218ef0;letter-spacing:0.251px;">Detalle Rol (8)</div>
<div class="tx" style="left:190.00px;top:273.15px;font-size:14px;font-weight:400;color:#218ef0;letter-spacing:0.374px;">Asientos Contables</div>
<div class="tx" style="left:377.00px;top:253.15px;font-size:14px;font-weight:400;color:#626262;letter-spacing:0.260px;">gad_vallehermos_2023</div>
<div class="tx" style="left:586.00px;top:253.15px;font-size:14px;font-weight:400;color:#626262;letter-spacing:0.000px;">9</div>
<div class="tx" style="left:611.00px;top:253.15px;font-size:14px;font-weight:400;color:#626262;letter-spacing:0.181px;">0803318435</div>
<div class="tx" style="left:721.00px;top:253.15px;font-size:14px;font-weight:400;color:#626262;letter-spacing:-0.306px;">PATA BANGUERA LESLY MISHEL</div>
<div class="tx" style="left:1117.00px;top:253.15px;font-size:14px;font-weight:400;color:#626262;letter-spacing:0.000px;">-</div>
<div class="tx" style="left:190.00px;top:310.15px;font-size:14px;font-weight:400;color:#218ef0;letter-spacing:0.149px;">Detalle Rol (10)</div>
<div class="tx" style="left:190.00px;top:330.15px;font-size:14px;font-weight:400;color:#218ef0;letter-spacing:0.303px;">Asientos Contables (3)</div>
<div class="tx" style="left:377.00px;top:310.15px;font-size:14px;font-weight:400;color:#626262;letter-spacing:0.260px;">gad_vallehermos_2023</div>
<div class="tx" style="left:586.00px;top:310.15px;font-size:14px;font-weight:400;color:#626262;letter-spacing:0.000px;">9</div>
<div class="tx" style="left:611.00px;top:310.15px;font-size:14px;font-weight:400;color:#626262;letter-spacing:0.181px;">1707693766</div>
<div class="tx" style="left:721.00px;top:310.15px;font-size:14px;font-weight:400;color:#626262;letter-spacing:-0.358px;">MORALES CHAVEZ WASHINGTON DE LOS SANTOS</div>
<div class="tx" style="left:1117.00px;top:310.15px;font-size:14px;font-weight:400;color:#626262;letter-spacing:0.000px;">-</div>
<div class="tx" style="left:190.00px;top:367.15px;font-size:14px;font-weight:400;color:#218ef0;letter-spacing:0.251px;">Detalle Rol (9)</div>
<div class="tx" style="left:190.00px;top:387.15px;font-size:14px;font-weight:400;color:#218ef0;letter-spacing:0.303px;">Asientos Contables (3)</div>
<div class="tx" style="left:377.00px;top:367.15px;font-size:14px;font-weight:400;color:#626262;letter-spacing:0.260px;">gad_vallehermos_2023</div>
<div class="tx" style="left:586.00px;top:367.15px;font-size:14px;font-weight:400;color:#626262;letter-spacing:0.000px;">9</div>
<div class="tx" style="left:611.00px;top:367.15px;font-size:14px;font-weight:400;color:#626262;letter-spacing:0.181px;">1708582901</div>
<div class="tx" style="left:721.00px;top:367.15px;font-size:14px;font-weight:400;color:#626262;letter-spacing:-0.603px;">PAREDES PERRAZO JAIME PATRICIO</div>
<div class="tx" style="left:1117.00px;top:367.15px;font-size:14px;font-weight:400;color:#626262;letter-spacing:0.000px;">-</div>
<div class="tx" style="left:190.00px;top:424.15px;font-size:14px;font-weight:400;color:#218ef0;letter-spacing:0.251px;">Detalle Rol (9)</div>
<div class="tx" style="left:190.00px;top:444.15px;font-size:14px;font-weight:400;color:#218ef0;letter-spacing:0.303px;">Asientos Contables (2)</div>
<div class="tx" style="left:377.00px;top:424.15px;font-size:14px;font-weight:400;color:#626262;letter-spacing:0.260px;">gad_vallehermos_2023</div>
<div class="tx" style="left:586.00px;top:424.15px;font-size:14px;font-weight:400;color:#626262;letter-spacing:0.000px;">9</div>
<div class="tx" style="left:611.00px;top:424.15px;font-size:14px;font-weight:400;color:#626262;letter-spacing:0.181px;">1710147347</div>
<div class="tx" style="left:721.00px;top:424.15px;font-size:14px;font-weight:400;color:#626262;letter-spacing:-0.451px;">CUICHAN VICENTE RODRIGO</div>
<div class="tx" style="left:1117.00px;top:424.15px;font-size:14px;font-weight:400;color:#626262;letter-spacing:0.000px;">-</div>
<div class="tx" style="left:190.00px;top:481.15px;font-size:14px;font-weight:400;color:#218ef0;letter-spacing:0.251px;">Detalle Rol (9)</div>
<div class="tx" style="left:190.00px;top:501.15px;font-size:14px;font-weight:400;color:#218ef0;letter-spacing:0.303px;">Asientos Contables (3)</div>
<div class="tx" style="left:377.00px;top:481.15px;font-size:14px;font-weight:400;color:#626262;letter-spacing:0.260px;">gad_vallehermos_2023</div>
<div class="tx" style="left:586.00px;top:481.15px;font-size:14px;font-weight:400;color:#626262;letter-spacing:0.000px;">9</div>
<div class="tx" style="left:611.00px;top:481.15px;font-size:14px;font-weight:400;color:#626262;letter-spacing:0.181px;">1710150812</div>
<div class="tx" style="left:721.00px;top:481.15px;font-size:14px;font-weight:400;color:#626262;letter-spacing:-0.475px;">LEITON BENAVIDES JOSE PATRICIO</div>
<div class="tx" style="left:1117.00px;top:481.15px;font-size:14px;font-weight:400;color:#626262;letter-spacing:0.000px;">-</div>
<div class="tx" style="left:190.00px;top:538.15px;font-size:14px;font-weight:400;color:#218ef0;letter-spacing:0.251px;">Detalle Rol (8)</div>
<div class="tx" style="left:190.00px;top:558.15px;font-size:14px;font-weight:400;color:#218ef0;letter-spacing:0.303px;">Asientos Contables (2)</div>
<div class="tx" style="left:377.00px;top:538.15px;font-size:14px;font-weight:400;color:#626262;letter-spacing:0.260px;">gad_vallehermos_2023</div>
<div class="tx" style="left:586.00px;top:538.15px;font-size:14px;font-weight:400;color:#626262;letter-spacing:0.000px;">9</div>
<div class="tx" style="left:611.00px;top:538.15px;font-size:14px;font-weight:400;color:#626262;letter-spacing:0.181px;">1714609094</div>
<div class="tx" style="left:721.00px;top:538.15px;font-size:14px;font-weight:400;color:#626262;letter-spacing:-0.460px;">LOZADA GARCÉS ROSALBA MARIBEL</div>
<div class="tx" style="left:1117.00px;top:538.15px;font-size:14px;font-weight:400;color:#626262;letter-spacing:0.000px;">-</div>
<div class="tx" style="left:190.00px;top:595.15px;font-size:14px;font-weight:400;color:#218ef0;letter-spacing:0.251px;">Detalle Rol (8)</div>
<div class="tx" style="left:190.00px;top:615.15px;font-size:14px;font-weight:400;color:#218ef0;letter-spacing:0.303px;">Asientos Contables (2)</div>
<div class="tx" style="left:377.00px;top:595.15px;font-size:14px;font-weight:400;color:#626262;letter-spacing:0.260px;">gad_vallehermos_2023</div>
<div class="tx" style="left:586.00px;top:595.15px;font-size:14px;font-weight:400;color:#626262;letter-spacing:0.000px;">9</div>
<div class="tx" style="left:611.00px;top:595.15px;font-size:14px;font-weight:400;color:#626262;letter-spacing:0.181px;">1715092241</div>
<div class="tx" style="left:721.00px;top:595.15px;font-size:14px;font-weight:400;color:#626262;letter-spacing:-0.341px;">OLAYA CAMPOS VERONICA</div>
<div class="tx" style="left:1117.00px;top:595.15px;font-size:14px;font-weight:400;color:#626262;letter-spacing:0.000px;">-</div>
<!--/PAGE-->
</div>
<div id="sb"><div class="abs" style="left:2px;top:152px;width:13px;height:283px;background:#c1c1c1"></div><svg class="abs" style="left:5px;top:7px" width="8" height="4" viewBox="0 0 8 4"><path d="M4 0L8 4H0z" fill="#505050"/></svg><svg class="abs" style="left:5px;top:614px" width="8" height="4" viewBox="0 0 8 4"><path d="M0 0h8L4 4z" fill="#505050"/></svg><div class="abs" style="left:0;top:624px;width:17px;height:1px;background:#fafafa"></div></div>
<div id="bottom"></div>
</body></html>
